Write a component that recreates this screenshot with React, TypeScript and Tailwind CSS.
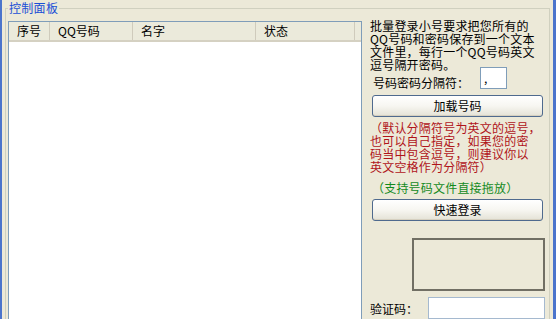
import React from "react";

const FONT = { fontFamily: '"Noto Sans CJK SC", "Noto Sans", sans-serif' };

const columns = [
  { label: "序号", w: "w-[41px]" },
  { label: "QQ号码", w: "w-[83px]" },
  { label: "名字", w: "w-[123px]" },
  { label: "状态", w: "w-[99px]" },
];

function XpButton({ children }: { children: React.ReactNode }) {
  return (
    <button className="ml-[2px] h-[22px] w-[171px] rounded-[3px] border border-[#4F6A8E] bg-gradient-to-b from-white via-[#F7F6F1] to-[#E4E2D6] text-[12px] leading-none text-black shadow-[inset_0_-1px_0_#D6D0C0]">
      {children}
    </button>
  );
}

export default function App() {
  return (
    <div
      className="flex h-[319px] w-[556px] overflow-hidden bg-[#ECE9D8] text-[12px] text-black"
      style={FONT}
    >
      {/* window frame edge */}
      <div className="w-[2px] shrink-0 bg-[#4B74CC]" />

      {/* group box */}
      <div className="relative ml-[3px] mt-[8px] flex w-[545px] shrink-0 border border-b-0 border-[#D0D0BF] pl-[2px] pt-[12px]">
        <span className="absolute -top-[8px] left-[2px] bg-[#ECE9D8] px-px text-[12px] leading-[13px] tracking-[0.3px] text-[#1A4FD6]">
          控制面板
        </span>

        {/* list view */}
        <div className="flex w-[354px] shrink-0 flex-col border border-b-0 border-[#7F9DB9] bg-white">
          <div className="flex h-[20px] border-b-2 border-[#D5D1C2] bg-[#EBEADB]">
            {columns.map((c) => (
              <div
                key={c.label}
                className={`${c.w} flex items-center border-r border-[#CFCBBC] pl-[8px] leading-none`}
              >
                {c.label}
              </div>
            ))}
          </div>
          <div className="flex-1" />
        </div>

        {/* right panel */}
        <div className="-mt-[2px] ml-[8px] flex flex-1 flex-col pr-[3px]">
          <div className="whitespace-nowrap leading-[13px] tracking-[0.2px]">
            <div>批量登录小号要求把您所有的</div>
            <div>QQ号码和密码保存到一个文本</div>
            <div>文件里，每行一个QQ号码英文</div>
            <div>逗号隔开密码。</div>
          </div>

          <div className="-mt-[4px] flex h-[22px] items-end">
            <span className="ml-[3px] w-[107px] leading-[13px]">号码密码分隔符：</span>
            <div className="flex h-[22px] w-[27px] items-center border border-[#7F9DB9] bg-white pl-[3px] leading-none">
              ,
            </div>
          </div>

          <div className="mt-[6px]">
            <XpButton>加载号码</XpButton>
          </div>

          <div className="mt-[4px] whitespace-nowrap leading-[13px] tracking-[0.2px] text-[#B0141A]">
            <div>（默认分隔符号为英文的逗号，</div>
            <div>也可以自己指定，如果您的密</div>
            <div>码当中包含逗号，则建议你以</div>
            <div>英文空格作为分隔符）</div>
          </div>

          <div className="ml-[2px] mt-[8px] whitespace-nowrap leading-[13px] tracking-[0.2px] text-[#138A1E]">
            （支持号码文件直接拖放）
          </div>

          <div className="mt-[5px]">
            <XpButton>快速登录</XpButton>
          </div>

          <div className="ml-[42px] mt-[17px] h-[54px] w-[133px] border-2 border-[#716F64]" />

          <div className="mt-[6px] flex h-[22px] items-center">
            <span className="w-[58px] leading-[13px]">验证码：</span>
            <div className="h-[22px] w-[117px] border border-[#A5B9CF] bg-white" />
          </div>
        </div>
      </div>

      <div className="ml-[3px] w-[3px] shrink-0 bg-[#4B74CC]" />
    </div>
  );
}
